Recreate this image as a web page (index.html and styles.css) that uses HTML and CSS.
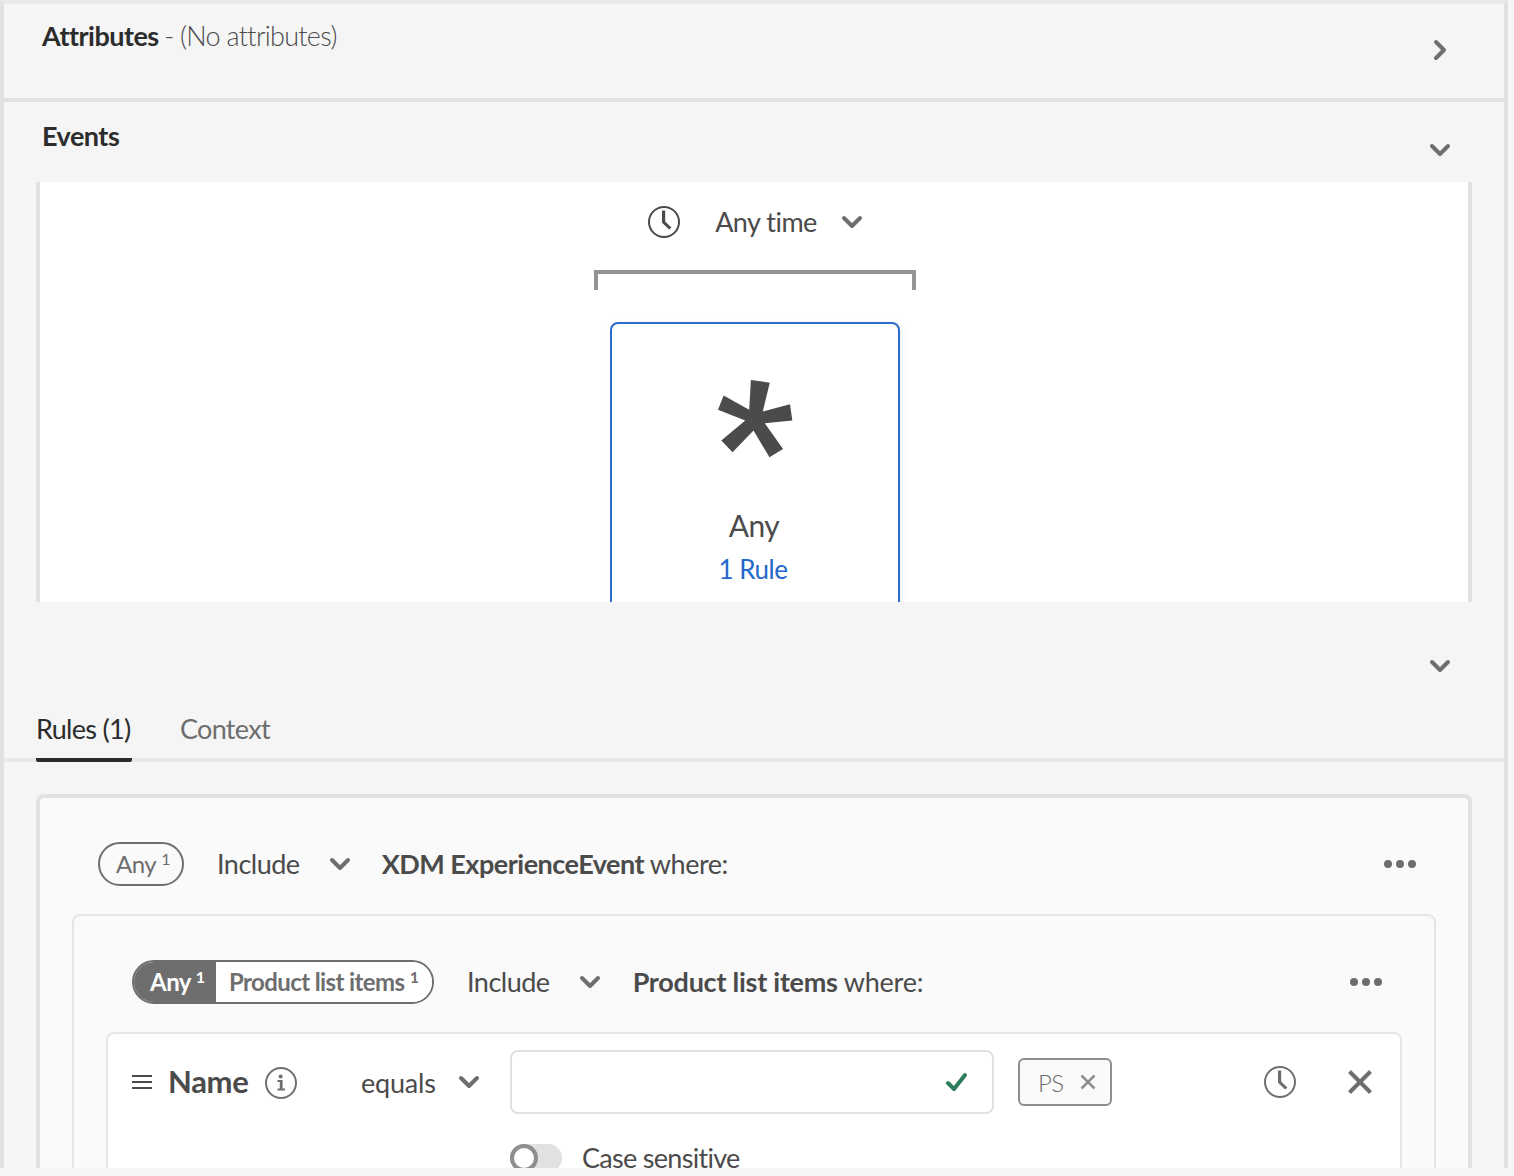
FILE: index.html
```html
<!DOCTYPE html>
<html lang="en">
<head>
  <meta charset="UTF-8" />
  <title>Segment rules</title>
  <link rel="stylesheet" href="styles.css">
</head>
<body>
  <div class="page">
    <section class="attr-head">
      <h2 class="head-title"><b>Attributes</b> <span class="muted">- (No attributes)</span></h2>
      <svg class="chev-right" width="14" height="24" viewBox="0 0 14 24"><polyline points="3,4 11,12 3,20" /></svg>
    </section>

    <section class="events">
      <div class="events-head">
        <h2 class="head-title"><b>Events</b></h2>
        <svg class="chev events-chev" width="24" height="14" viewBox="0 0 24 14"><polyline points="4,3 12,11 20,3" /></svg>
      </div>

      <div class="canvas">
        <div class="time-bar">
          <svg class="clock clock-dark" width="32" height="32" viewBox="0 0 32 32">
            <circle cx="16" cy="16" r="15" />
            <polygon points="14,4.5 17.2,4.5 17.2,15.5 23.4,21.4 21.2,23.6 14,16.8" />
          </svg>
          <span class="time-label">Any time</span>
          <svg class="chev" width="24" height="14" viewBox="0 0 24 14"><polyline points="4,3 12,11 20,3" /></svg>
        </div>
        <div class="bracket"></div>
        <div class="event-card">
          <svg class="star" width="78" height="82" viewBox="465 595 235 245">
            <polygon points="570,600 627,608 606,695 688,673 695,722 612,730 667,808 626,833 578,752 515,818 481,782 553,722 471,690 488,647 565,690" />
          </svg>
          <div class="card-name">Any</div>
          <div class="card-link">1 Rule</div>
        </div>
      </div>

      <div class="collapse-row">
        <svg class="chev" width="24" height="14" viewBox="0 0 24 14"><polyline points="4,3 12,11 20,3" /></svg>
      </div>

      <div class="tabs">
        <div class="tab tab-active">Rules (1)</div>
        <div class="tab">Context</div>
      </div>

      <div class="rule-box">
        <div class="rule-row">
          <span class="pill">Any <sup>1</sup></span>
          <span class="include">Include</span>
          <svg class="chev" width="24" height="14" viewBox="0 0 24 14"><polyline points="4,3 12,11 20,3" /></svg>
          <span class="rule-title"><b>XDM ExperienceEvent</b> where:</span>
          <span class="dots"><i></i><i></i><i></i></span>
        </div>

        <div class="group-box">
          <div class="rule-row">
            <span class="pill-double">
              <span class="pill-dark">Any <sup>1</sup></span>
              <span class="pill-light">Product list items <sup>1</sup></span>
            </span>
            <span class="include">Include</span>
            <svg class="chev" width="24" height="14" viewBox="0 0 24 14"><polyline points="4,3 12,11 20,3" /></svg>
            <span class="rule-title rule-title-wide"><b>Product list items</b> where:</span>
            <span class="dots"><i></i><i></i><i></i></span>
          </div>

          <div class="cond-box">
            <div class="cond-row">
              <div class="cond-field">
                <span class="burger"><i></i><i></i><i></i></span>
                <span class="field-name">Name</span>
                <svg class="info" width="32" height="32" viewBox="0 0 32 32">
                  <circle cx="16" cy="16" r="15" />
                  <circle class="info-fill" cx="15.6" cy="9.5" r="2" />
                  <polygon class="info-fill" points="12.5,13 17.6,13 17.6,21.6 20,21.6 20,23.5 12.5,23.5 12.5,21.6 14.8,21.6 14.8,14.9 12.5,14.9" />
                </svg>
              </div>
              <div class="cond-op">
                <span>equals</span>
                <svg class="chev" width="24" height="14" viewBox="0 0 24 14"><polyline points="4,3 12,11 20,3" /></svg>
              </div>
              <div class="value-input">
                <svg class="check" width="24" height="20" viewBox="0 0 24 20"><polyline points="4,11 10,17 21,3" /></svg>
              </div>
              <span class="tag">PS
                <svg class="tag-x" width="16" height="16" viewBox="0 0 16 16"><path d="M1.5,1.5 L14.5,14.5 M14.5,1.5 L1.5,14.5" /></svg>
              </span>
              <svg class="clock row-clock" width="32" height="32" viewBox="0 0 32 32">
                <circle cx="16" cy="16" r="15" />
                <polygon points="14,4.5 17.2,4.5 17.2,15.5 23.4,21.4 21.2,23.6 14,16.8" />
              </svg>
              <svg class="close-x" width="24" height="24" viewBox="0 0 24 24"><path d="M1.5,1.5 L22.5,22.5 M22.5,1.5 L1.5,22.5" /></svg>
            </div>
            <div class="toggle-row">
              <span class="toggle"><span class="knob"></span></span>
              <span class="toggle-label">Case sensitive</span>
            </div>
          </div>
        </div>
      </div>
    </section>
  </div>
</body>
</html>
```

FILE: styles.css
```css
* {
  padding: 0;
  margin: 0;
  box-sizing: border-box;
}
body {
  background-color: #f5f5f5;
  height: 1176px;
  overflow: hidden;
  font-family: "Lato", "Noto Sans", sans-serif;
  letter-spacing: -0.5px;
  color: #4b4b4b;
}
.page {
  width: 1508px;
  height: 1168px;
  overflow: hidden;
  border-top: 4px solid #e9e9e9;
  border-left: 4px solid #e1e1e1;
  border-right: 4px solid #e1e1e1;
}

/* icons */
svg {
  display: block;
  flex: none;
}
.chev polyline,
.chev-right polyline {
  fill: none;
  stroke: #6e6e6e;
  stroke-width: 4;
  stroke-linecap: round;
  stroke-linejoin: round;
}
.clock circle,
.info circle {
  fill: none;
  stroke: #6e6e6e;
  stroke-width: 2;
}
.clock polygon {
  fill: #6e6e6e;
}
.clock-dark circle {
  stroke: #4b4b4b;
}
.clock-dark polygon {
  fill: #4b4b4b;
}
.info .info-fill {
  fill: #6e6e6e;
  stroke: none;
}

/* section heads */
.attr-head {
  height: 94px;
  padding: 15px 57px 0 38px;
  display: flex;
  justify-content: space-between;
}
.head-title {
  font-size: 27px;
  line-height: 34px;
  font-weight: 400;
  color: #2c2c2c;
}
.head-title b {
  font-weight: 700;
}
.muted {
  margin-left: -1px;
  font-weight: 300;
  letter-spacing: -0.7px;
  color: #4b4b4b;
}
.chev-right {
  margin: 19px 0 0 0;
}
.events {
  border-top: 4px solid #e1e1e1;
}
.events-head {
  height: 80px;
  padding: 17px 52px 0 38px;
  display: flex;
  justify-content: space-between;
}
.events-chev {
  margin-top: 24px;
}

/* white canvas */
.canvas {
  height: 420px;
  margin: 0 32px;
  padding: 24px 0 0 2px;
  overflow: hidden;
  background-color: #fff;
  border-left: 4px solid #e1e1e1;
  border-right: 4px solid #e1e1e1;
  display: flex;
  flex-direction: column;
  align-items: center;
}
.time-bar {
  height: 32px;
  margin-left: 2px;
  display: flex;
  align-items: center;
}
.time-label {
  margin: -2px 23px 0 35px;
  font-size: 27px;
}
.bracket {
  width: 322px;
  height: 20px;
  flex: none;
  margin: 32px 0;
  border: 4px solid #949494;
  border-bottom: none;
}
.event-card {
  width: 290px;
  height: 340px;
  flex: none;
  padding-top: 54px;
  border: 2px solid #2b6bc9;
  border-radius: 8px;
  box-shadow: 2px 2px 8px rgba(0, 0, 0, 0.06);
  display: flex;
  flex-direction: column;
  align-items: center;
}
.star polygon {
  fill: #4b4b4b;
}
.card-name {
  margin: 45px 2px 0 0;
  font-size: 30px;
  line-height: 40px;
}
.card-link {
  margin: 4px 4px 0 0;
  font-size: 26px;
  line-height: 40px;
  color: #2468cc;
}

/* tabs */
.collapse-row {
  height: 86px;
  padding: 57px 52px 0 0;
  display: flex;
  justify-content: flex-end;
}
.tabs {
  height: 74px;
  padding-left: 32px;
  display: flex;
  gap: 48px;
  border-bottom: 4px solid #e8e8e8;
}
.tab {
  height: 74px;
  padding-top: 23px;
  font-size: 27px;
  line-height: 36px;
  letter-spacing: -0.7px;
  color: #6e6e6e;
}
.tab-active {
  width: 96px;
  color: #2c2c2c;
  border-bottom: 4px solid #2c2c2c;
  border-radius: 2px;
}

/* rule boxes */
.rule-box {
  margin: 32px 32px 0;
  padding: 0 32px;
  height: 500px;
  background-color: #fafafa;
  border: 4px solid #e1e1e1;
  border-radius: 8px;
}
.rule-row {
  padding: 44px 20px 28px 26px;
  height: 116px;
  display: flex;
  align-items: center;
}
.pill {
  width: 86px;
  height: 44px;
  padding-left: 16px;
  border: 2px solid #6e6e6e;
  border-radius: 22px;
  font-size: 24px;
  line-height: 40px;
  color: #6e6e6e;
  white-space: nowrap;
}
sup {
  font-size: 16px;
  line-height: 0;
  vertical-align: 8px;
}
.include {
  margin: -2px 28px 0 33px;
  font-size: 27px;
}
.rule-title {
  margin: -2px 0 0 30px;
  font-size: 27px;
}
.rule-title-wide {
  margin-left: 31px;
  letter-spacing: -0.25px;
}
.rule-title b {
  font-weight: 700;
}
.dots {
  margin-left: auto;
  display: flex;
  gap: 4px;
}
.dots i {
  width: 8px;
  height: 8px;
  border-radius: 50%;
  background-color: #6e6e6e;
}
.group-box {
  padding: 0 32px;
  height: 400px;
  background-color: #fafafa;
  border: 2px solid #e6e6e6;
  border-radius: 8px;
}
.pill-double {
  height: 44px;
  width: 302px;
  overflow: hidden;
  border: 2px solid #6e6e6e;
  border-radius: 22px;
  display: flex;
  font-size: 24px;
  line-height: 40px;
  white-space: nowrap;
}
.pill-dark {
  width: 82px;
  padding-left: 16px;
  flex: none;
  font-weight: 700;
  color: #fff;
  background-color: #6e6e6e;
}
.pill-light {
  flex: 1;
  padding-left: 13px;
  font-weight: 700;
  letter-spacing: -0.6px;
  color: #6e6e6e;
  background-color: #fff;
}

/* condition */
.cond-box {
  height: 300px;
  background-color: #fff;
  border: 2px solid #e6e6e6;
  border-radius: 8px;
}
.cond-row {
  padding: 16px 28px 0 24px;
  display: flex;
  align-items: center;
}
.cond-field {
  width: 228px;
  display: flex;
  align-items: center;
}
.burger {
  width: 20px;
  display: flex;
  flex-direction: column;
  gap: 4px;
}
.burger i {
  height: 2px;
  background-color: #4b4b4b;
}
.field-name {
  margin: -2px 16px 0 16px;
  font-size: 31px;
  font-weight: 700;
  letter-spacing: -0.3px;
  color: #4b4b4b;
}
.info {
  margin-top: 2px;
}
.cond-op {
  width: 150px;
  padding-left: 1px;
  font-size: 27px;
  letter-spacing: -0.2px;
  display: flex;
  align-items: center;
  gap: 21px;
}
.value-input {
  width: 484px;
  height: 64px;
  padding: 0 24px;
  border: 2px solid #e1e1e1;
  border-radius: 8px;
  display: flex;
  align-items: center;
  justify-content: flex-end;
}
.check polyline {
  fill: none;
  stroke: #2d7d5a;
  stroke-width: 4;
  stroke-linecap: round;
  stroke-linejoin: round;
}
.tag {
  height: 48px;
  width: 94px;
  margin-left: 24px;
  padding-left: 18px;
  border: 2px solid #8e8e8e;
  border-radius: 6px;
  background-color: #fafafa;
  font-size: 24px;
  font-weight: 300;
  color: #6e6e6e;
  display: flex;
  align-items: center;
  gap: 16px;
}
.tag-x path {
  fill: none;
  stroke: #8e8e8e;
  stroke-width: 2.5;
}
.row-clock {
  margin-left: auto;
}
.close-x {
  margin-left: 52px;
}
.close-x path {
  fill: none;
  stroke: #6e6e6e;
  stroke-width: 4;
}
.toggle-row {
  margin: 30px 0 0 402px;
  display: flex;
  align-items: flex-start;
}
.toggle {
  width: 52px;
  height: 28px;
  position: relative;
  border-radius: 14px;
  background-color: #e1e1e1;
}
.knob {
  position: absolute;
  left: 0;
  top: 0;
  width: 28px;
  height: 28px;
  border: 4px solid #8e8e8e;
  border-radius: 50%;
  background-color: #fff;
}
.toggle-label {
  margin-left: 20px;
  font-size: 27px;
  letter-spacing: -0.7px;
  line-height: 28px;
}
```
